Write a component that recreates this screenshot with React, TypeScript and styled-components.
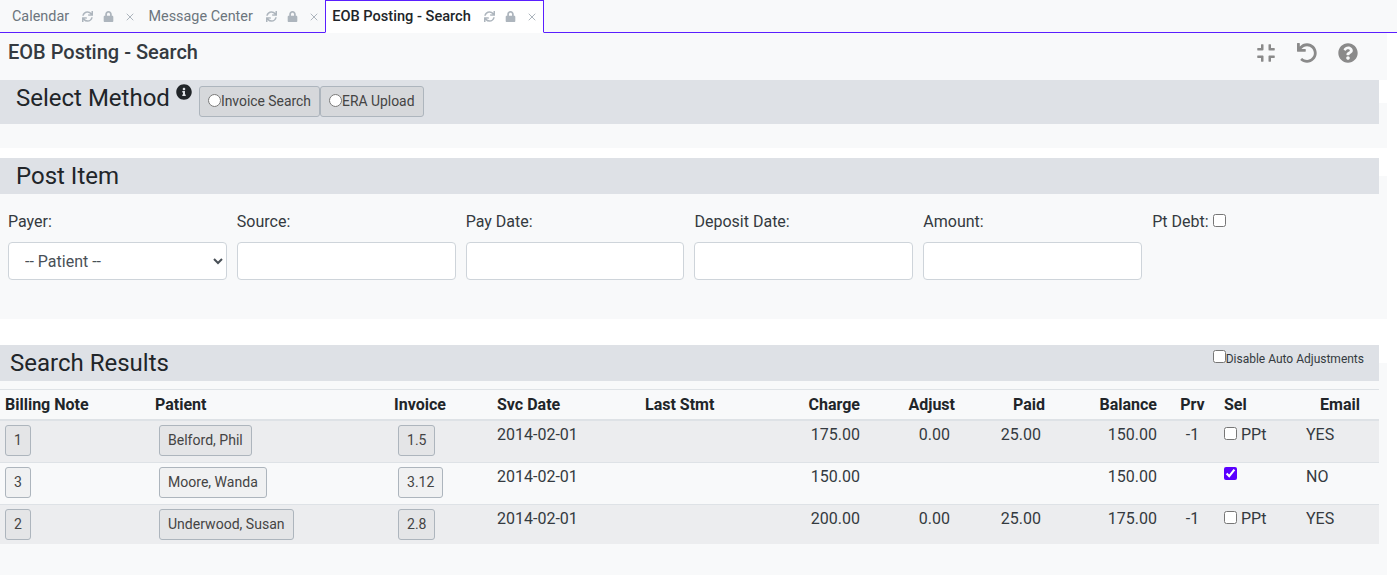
import React from "react";
import styled, { createGlobalStyle } from "styled-components";
import { FaSync, FaLock, FaCompress, FaUndo, FaQuestionCircle, FaInfoCircle } from "react-icons/fa";
import { FiX } from "react-icons/fi";

const Global = createGlobalStyle`
  html, body { margin: 0; padding: 0; height: 100%; background: #fff; }
  body { font-family: Roboto, "Liberation Sans", sans-serif; font-size: 16px; line-height: 21px; color: #212529; overflow: hidden; }
  #root { height: 100%; }
  input[type=checkbox], input[type=radio] { margin: 0; width: 13px; height: 13px; accent-color: #5a00ff; }
`;

const Page = styled.div`
  display: flex;
  flex-direction: column;
  height: 100%;
`;

const TabBar = styled.div`
  display: flex;
  align-items: flex-end;
  height: 33px;
  padding-left: 5px;
  background: #f8f9fa;
  border-bottom: 1px solid #5a1fff;
  box-sizing: border-box;
`;

const Tab = styled.div<{ $active?: boolean }>`
  display: flex;
  align-items: center;
  box-sizing: border-box;
  height: ${(p) => (p.$active ? "33px" : "31px")};
  padding: 0 ${(p) => (p.$active ? "4.8px" : "5.4px")} 0 ${(p) => (p.$active ? "6px" : "7px")};
  margin-bottom: ${(p) => (p.$active ? "-1px" : "0")};
  color: ${(p) => (p.$active ? "#212529" : "#6c757d")};
  font-weight: ${(p) => (p.$active ? 500 : 400)};
  font-size: ${(p) => (p.$active ? "14.6px" : "14.4px")};
  background: ${(p) => (p.$active ? "#fff" : "transparent")};
  border: ${(p) => (p.$active ? "1px solid #5a1fff" : "none")};
  border-bottom: ${(p) => (p.$active ? "1px solid #fff" : "none")};
`;

const TabIcons = styled.span`
  display: flex;
  align-items: center;
  margin-left: 13px;
  color: #adb5bd;
  font-size: 11px;
  gap: 10px;
  svg:last-child { font-size: 12px; }
`;

const TitleRow = styled.div`
  display: flex;
  align-items: flex-start;
  justify-content: space-between;
  height: 47px;
  margin-right: 10px;
  padding: 0 29px 0 8px;
  background: #f8f9fa;
  box-sizing: border-box;
`;

const PageTitle = styled.h2`
  margin: 0;
  font-size: 20px;
  line-height: 38px;
  font-weight: 500;
  color: #343a40;
`;

const ToolIcons = styled.div`
  display: flex;
  align-items: center;
  gap: 21px;
  height: 40px;
  color: #8a8a8a;
  font-size: 20px;
`;

const Bar = styled.div<{ $h: number; $overlap: number; $pad: number }>`
  position: relative;
  z-index: 1;
  display: flex;
  align-items: flex-start;
  justify-content: space-between;
  height: ${(p) => p.$h}px;
  margin-right: 18px;
  margin-bottom: -${(p) => p.$overlap}px;
  padding-left: ${(p) => p.$pad}px;
  padding-right: 15px;
  background: #dee1e6;
  flex: none;
`;

const BarTitle = styled.h4`
  margin: 0;
  font-size: 24px;
  line-height: 36px;
  font-weight: 400;
  color: #212529;
`;

const MethodGroup = styled.div`
  display: flex;
  align-items: flex-start;
`;

const InfoMark = styled.span`
  display: flex;
  margin: 4px 7px 0 6px;
  font-size: 16px;
  color: #212529;
`;

const RadioBox = styled.label`
  display: flex;
  align-items: flex-start;
  box-sizing: border-box;
  height: 31px;
  margin-top: 6px;
  padding: 4px 8px 0;
  background: #d6d8db;
  border: 1px solid #adb5bd;
  border-radius: 3px;
  color: #444;
  font-size: 13.9px;
  input { margin-top: 3px; }
`;

const Panel = styled.div<{ $h?: number; $fill?: boolean; $pt: number }>`
  margin-right: 10px;
  padding-top: ${(p) => p.$pt}px;
  background: #f8f9fa;
  box-sizing: border-box;
  ${(p) => (p.$h ? `height: ${p.$h}px; flex: none;` : "")}
  ${(p) => (p.$fill ? "flex: 1; min-height: 0;" : "")}
`;

const Gap = styled.div<{ $h: number }>`
  height: ${(p) => p.$h}px;
  flex: none;
`;

const FormGrid = styled.div`
  display: grid;
  grid-template-columns: repeat(6, 228.83px);
  padding-left: 3px;
`;

const Field = styled.div`
  display: flex;
  flex-direction: column;
  gap: 8px;
  padding: 0 5px;
  min-width: 0;
`;

const FieldLabel = styled.label`
  display: flex;
  align-items: flex-start;
  gap: 4px;
  line-height: 24px;
  color: #343a40;
  input { margin-top: 4px; }
`;

const TextInput = styled.input`
  box-sizing: border-box;
  width: 100%;
  height: 38px;
  padding: 6px 12px;
  background: #fff;
  border: 1px solid #ced4da;
  border-radius: 4px;
  font: inherit;
`;

const Select = styled.select`
  box-sizing: border-box;
  width: 100%;
  height: 38px;
  padding: 6px 12px;
  background: #fff;
  border: 1px solid #ced4da;
  border-radius: 4px;
  color: #495057;
  font: inherit;
`;

const AutoAdjust = styled.label`
  display: flex;
  align-items: flex-start;
  margin-top: 4px;
  font-size: 12px;
  line-height: 21px;
  color: #343a40;
  input { margin-top: 1px; }
`;

const Table = styled.table`
  width: 1379px;
  table-layout: fixed;
  border-collapse: collapse;
`;

const Th = styled.th<{ $w: number; $align?: string; $pl?: number }>`
  width: ${(p) => p.$w}px;
  box-sizing: border-box;
  height: 30.5px;
  padding: 4px 5px 4px ${(p) => p.$pl ?? 5}px;
  text-align: ${(p) => p.$align || "left"};
  font-weight: 700;
  font-size: 16px;
  color: #212529;
  border-top: 1px solid #dee2e6;
  border-bottom: 2px solid #dee2e6;
`;

const Tr = styled.tr<{ $odd?: boolean }>`
  background: ${(p) => (p.$odd ? "#ecedef" : "transparent")};
`;

const Td = styled.td<{ $align?: string; $pl?: number; $pr?: number }>`
  box-sizing: border-box;
  height: 42px;
  padding: 3px ${(p) => p.$pr ?? 5}px 3px ${(p) => p.$pl ?? 5}px;
  vertical-align: top;
  text-align: ${(p) => p.$align || "left"};
  color: #343a40;
  font-size: 16px;
  border-top: 1px solid #dee2e6;
  tr:last-child > & { height: 40px; }
`;

const RowBtn = styled.span<{ $inset?: boolean; $pr?: number }>`
  display: block;
  width: fit-content;
  box-sizing: border-box;
  height: 31px;
  margin: 1px 0 0 ${(p) => (p.$inset ? "4px" : "0")};
  padding: 4px ${(p) => p.$pr ?? 7.6}px 4px 8px;
  background: rgba(0, 0, 0, 0.03);
  border: 1px solid #adb5bd;
  border-radius: 3px;
  color: #444;
  font-size: 14.05px;
`;

const SelCell = styled.span<{ $checked?: boolean }>`
  display: flex;
  align-items: flex-start;
  gap: 4px;
  input { margin-top: ${(p) => (p.$checked ? "1px" : "3px")}; }
`;

const tabs = ["Calendar", "Message Center", "EOB Posting - Search"];

const rows = [
  { note: "1", patient: "Belford, Phil", inv: "1.5", charge: "175.00", adjust: "0.00", paid: "25.00", bal: "150.00", prv: "-1", ppt: true, email: "YES" },
  { note: "3", patient: "Moore, Wanda", inv: "3.12", charge: "150.00", adjust: "", paid: "", bal: "150.00", prv: "", ppt: false, email: "NO" },
  { note: "2", patient: "Underwood, Susan", inv: "2.8", charge: "200.00", adjust: "0.00", paid: "25.00", bal: "175.00", prv: "-1", ppt: true, email: "YES" },
];

const heads: [string, number, string?, number?][] = [
  ["Billing Note", 150], ["Patient", 239], ["Invoice", 103], ["Svc Date", 148], ["Last Stmt", 100],
  ["Charge", 125, "right"], ["Adjust", 95, "right"], ["Paid", 90, "right"], ["Balance", 112, "right"],
  ["Prv", 57, "center", 9], ["Sel", 82], ["Email", 78, "center"],
];

export default function App() {
  return (
    <Page>
      <Global />
      <TabBar>
        {tabs.map((t, i) => (
          <Tab key={t} $active={i === 2}>
            {t}
            <TabIcons><FaSync /><FaLock /><FiX /></TabIcons>
          </Tab>
        ))}
      </TabBar>
      <TitleRow>
        <PageTitle>EOB Posting - Search</PageTitle>
        <ToolIcons><FaCompress /><FaUndo /><FaQuestionCircle /></ToolIcons>
      </TitleRow>

      <Bar $h={44} $overlap={21} $pad={16}>
        <MethodGroup>
          <BarTitle>Select Method</BarTitle>
          <InfoMark><FaInfoCircle /></InfoMark>
          <RadioBox><input type="radio" name="m" />Invoice Search</RadioBox>
          <RadioBox><input type="radio" name="m" />ERA Upload</RadioBox>
        </MethodGroup>
      </Bar>
      <Panel $h={45} $pt={21} />
      <Gap $h={10} />

      <Bar $h={36} $overlap={18} $pad={16}>
        <BarTitle>Post Item</BarTitle>
      </Bar>
      <Panel $h={143} $pt={34}>
        <FormGrid>
          <Field>
            <FieldLabel>Payer:</FieldLabel>
            <Select defaultValue="p"><option value="p">-- Patient --</option></Select>
          </Field>
          <Field><FieldLabel>Source:</FieldLabel><TextInput /></Field>
          <Field><FieldLabel>Pay Date:</FieldLabel><TextInput /></Field>
          <Field><FieldLabel>Deposit Date:</FieldLabel><TextInput /></Field>
          <Field><FieldLabel>Amount:</FieldLabel><TextInput /></Field>
          <Field><FieldLabel>Pt Debt:<input type="checkbox" /></FieldLabel></Field>
        </FormGrid>
      </Panel>
      <Gap $h={26} />

      <Bar $h={36} $overlap={18} $pad={10}>
        <BarTitle>Search Results</BarTitle>
        <AutoAdjust><input type="checkbox" />Disable Auto Adjustments</AutoAdjust>
      </Bar>
      <Panel $fill $pt={26}>
        <Table>
          <thead>
            <tr>
              {heads.map(([h, w, a, pl]) => <Th key={h} $w={w} $align={a} $pl={pl}>{h}</Th>)}
            </tr>
          </thead>
          <tbody>
            {rows.map((r, i) => (
              <Tr key={r.note} $odd={i % 2 === 0}>
                <Td><RowBtn>{r.note}</RowBtn></Td>
                <Td><RowBtn $inset $pr={8.2}>{r.patient}</RowBtn></Td>
                <Td><RowBtn $inset>{r.inv}</RowBtn></Td>
                <Td>2014-02-01</Td>
                <Td />
                <Td $align="right">{r.charge}</Td>
                <Td $align="right" $pr={10}>{r.adjust}</Td>
                <Td $align="right" $pr={9}>{r.paid}</Td>
                <Td $align="right">{r.bal}</Td>
                <Td $align="center" $pl={9}>{r.prv}</Td>
                <Td>
                  {r.ppt
                    ? <SelCell><input type="checkbox" />PPt</SelCell>
                    : <SelCell $checked><input type="checkbox" defaultChecked /></SelCell>}
                </Td>
                <Td>{r.email}</Td>
              </Tr>
            ))}
          </tbody>
        </Table>
      </Panel>
    </Page>
  );
}
